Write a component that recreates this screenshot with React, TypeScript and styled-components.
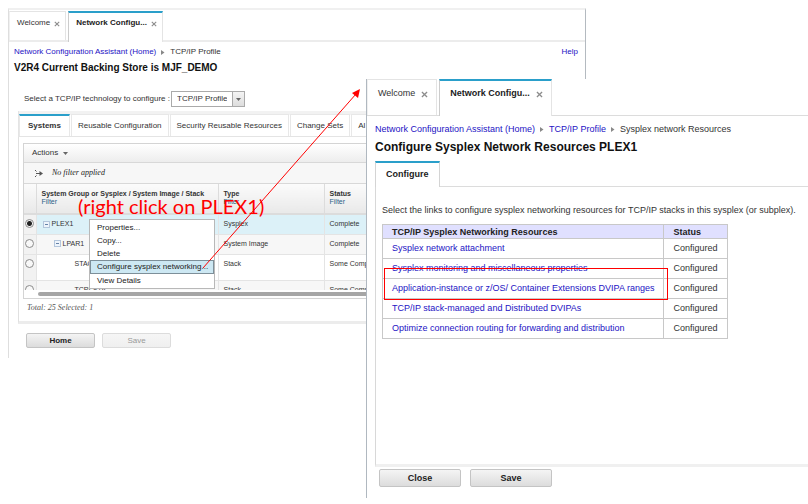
import React from "react";
import styled, { createGlobalStyle, css } from "styled-components";

const Global = createGlobalStyle`
  *, *::before, *::after { box-sizing: border-box; }
  body { margin: 0; background: #fff; color: #333; font-family: "Liberation Sans", Arial, sans-serif; }
  button, select, input { font: inherit; color: inherit; margin: 0; }
`;

const Desktop = styled.div`
  position: relative;
  min-height: 100vh;
  overflow: hidden;
  padding: 8px 0 0 8px;
`;

/* ---------- shared window parts ---------- */

const BackWindow = styled.section`
  width: calc(100% - 222px);
  border-top: 2px solid #f0f0f0;
  border-left: 1px solid #dedede;
  border-right: 1px solid #b4bac0;
  font-size: 8px;
  line-height: 10px;
`;

const FrontWindow = styled.section`
  position: absolute;
  left: 366px;
  right: 0;
  top: 79px;
  bottom: 6px;
  display: flex;
  flex-direction: column;
  background: #fff;
  border-left: 1px solid #b0b8c0;
  font-size: 9px;
  line-height: 12px;
`;

const TabBar = styled.div<{ $tall?: boolean }>`
  display: flex;
  gap: 2px;
  height: ${(p) => (p.$tall ? 37 : 32)}px;
  padding-top: ${(p) => (p.$tall ? 0 : 1)}px;
  border-bottom: ${(p) => (p.$tall ? "1px solid #dcdcdc" : "2px solid #ececec")};
`;

const WindowTab = styled.div<{ $active?: boolean; $tall?: boolean }>`
  display: flex;
  align-items: flex-start;
  gap: ${(p) => (p.$tall ? 6 : 4)}px;
  padding: ${(p) => (p.$tall ? "6px 8px 0 10px" : "5px 5px 0 7px")};
  height: ${(p) => (p.$tall ? 37 : 31)}px;
  border: 1px solid #e4e4e4;
  border-left-color: ${(p) => (p.$active ? "#ccc" : "#f0f0f0")};
  border-bottom: 0;
  background: #fff;
  ${(p) =>
    p.$active
      ? css`
          border-top: 2px solid #2a9fca;
          font-weight: bold;
          color: #222;
        `
      : css`
          height: ${p.$tall ? 36 : 29}px;
          padding-top: ${p.$tall ? 7 : 6}px;
        `}
`;

const TabButton = styled.button`
  padding: 0;
  border: 0;
  background: none;
  white-space: nowrap;
`;

const CloseTab = styled.button<{ $tall?: boolean }>`
  display: flex;
  padding: ${(p) => (p.$tall ? 4 : 3)}px 0 0;
  border: 0;
  background: none;
  color: #8c8c8c;
`;

const CloseGlyph = ({ size }: { size: number }) => (
  <svg width={size} height={size} viewBox="0 0 6 6" aria-hidden="true">
    <path d="M.8.8l4.4 4.4M5.2.8L.8 5.2" stroke="currentColor" strokeWidth="1.1" />
  </svg>
);

const Crumbs = styled.nav`
  display: flex;
  align-items: center;
  gap: 5px;
  white-space: nowrap;
`;

const Link = styled.a`
  color: #1d12c4;
  text-decoration: none;
`;

const Spacer = styled.span`
  flex: 1;
`;

const CrumbArrow = () => (
  <svg width="4" height="5" viewBox="0 0 4 5" aria-hidden="true">
    <path d="M0 0l3.5 2.5L0 5z" fill="#888" />
  </svg>
);

const ActionButton = styled.button<{ $wide?: boolean }>`
  width: ${(p) => (p.$wide ? 82 : 69)}px;
  height: ${(p) => (p.$wide ? 18 : 15)}px;
  padding: 0;
  border: 1px solid #c4c4c4;
  border-radius: 2px;
  background: linear-gradient(#f4f4f4, #dcdcdc);
  color: #222;
  font-weight: bold;
  &:disabled {
    color: #999;
    font-weight: normal;
    border-color: #dcdcdc;
    background: linear-gradient(#f6f6f6, #efefef);
  }
`;

/* ---------- back window ---------- */

const BackHead = styled.header`
  padding: 5px 7px 0 5px;
`;

const BackTitle = styled.h1`
  margin: 4px 0 0;
  font-size: 10px;
  line-height: 14px;
  color: #111;
`;

const TechRow = styled.div`
  display: flex;
  align-items: center;
  gap: 1px;
  margin: 16px 0 0 15px;
`;

const SelectBox = styled.div`
  display: flex;
  height: 16px;
  width: 74px;
  border: 1px solid #aaa;
`;

const Select = styled.select`
  appearance: none;
  flex: 1;
  min-width: 0;
  padding: 0 5px;
  border: 0;
  border-radius: 0;
  background: #fff;
  outline: none;
`;

const SelectCap = styled.span`
  display: flex;
  align-items: center;
  justify-content: center;
  width: 12px;
  border-left: 1px solid #aaa;
  background: linear-gradient(#f4f4f4, #ddd);
`;

const DownGlyph = () => (
  <svg width="5" height="3" viewBox="0 0 5 3" aria-hidden="true">
    <path d="M0 0h5L2.5 3z" fill="#666" />
  </svg>
);

const InnerTabs = styled.div`
  display: flex;
  gap: 1px;
  margin: 4px 0 0 9px;
  padding-top: 3px;
  height: 26px;
  overflow: hidden;
  background: linear-gradient(#f2f2f2 4px, #fff 4px);
  border-bottom: 1px solid #e4e4e4;
  border-left: 1px solid #e4e4e4;
`;

const InnerTab = styled.button<{ $active?: boolean }>`
  flex: none;
  padding: 0 ${(p) => (p.$active ? 8 : 6)}px;
  border: 1px solid #e8e8e8;
  border-top: ${(p) => (p.$active ? "2px solid #2a9fca" : "1px solid #e8e8e8")};
  border-bottom: 0;
  background: #fff;
  font-weight: ${(p) => (p.$active ? "bold" : "normal")};
`;

const BackPanel = styled.div`
  margin-left: 9px;
  padding: 6px 0 8px 4px;
  border-left: 1px solid #e0e0e0;
  border-bottom: 3px solid #ececec;
`;

const GridFrame = styled.div`
  border: 1px solid #d4d4d4;
`;

const Toolbar = styled.div`
  display: flex;
  align-items: center;
  height: 19px;
  padding-left: 8px;
  border-bottom: 1px solid #d8d8d8;
  background: linear-gradient(#fff, #ededed);
`;

const MenuButton = styled.button`
  display: flex;
  align-items: center;
  gap: 5px;
  padding: 0;
  border: 0;
  background: none;
`;

const FilterBar = styled.div`
  display: flex;
  align-items: center;
  gap: 9px;
  height: 21px;
  padding-left: 10px;
  border-bottom: 1px solid #d8d8d8;
  background: #f7f7f7;
  font: italic 8px/10px "Liberation Serif", Georgia, serif;
  color: #222;
`;

const GridClip = styled.div`
  height: 106px;
  overflow: hidden;
`;

const Grid = styled.table`
  width: 100%;
  border-collapse: collapse;
  table-layout: fixed;
  font-size: 7px;
  line-height: 8px;
  th {
    height: 30px;
    padding: 6px 0 0 5px;
    vertical-align: top;
    text-align: left;
    border-right: 1px solid #dcdcdc;
    border-bottom: 2px solid #dcdcdc;
    background: linear-gradient(#fbfbfb, #e9e9e9);
    white-space: nowrap;
  }
  td {
    padding: 5px 0 0 5px;
    vertical-align: top;
    border-right: 1px solid #e4e4e4;
    border-bottom: 1px solid #e4e4e4;
    white-space: nowrap;
  }
`;

const FilterLink = styled.a`
  display: block;
  color: #2b5f86;
  font-weight: normal;
  text-decoration: none;
`;

const Row = styled.tr<{ $tone: string; $h: number }>`
  height: ${(p) => p.$h}px;
  background: ${(p) => p.$tone};
  td:first-child {
    padding: 4px 0 0 1px;
    background: #f2f2f2;
  }
`;

const Radio = styled.input`
  appearance: none;
  display: block;
  width: 9px;
  height: 9px;
  border: 1px solid #8c8c8c;
  border-radius: 50%;
  background: #f8f8f8;
  &:checked {
    background: radial-gradient(circle, #222 0 2px, #f4f4f4 3px);
  }
`;

const TreeName = styled.span<{ $level: number }>`
  display: flex;
  align-items: center;
  gap: 2px;
  padding-left: ${(p) => [1, 12, 33][p.$level]}px;
`;

const Minus = () => (
  <svg width="7" height="7" viewBox="0 0 7 7" aria-hidden="true">
    <rect x=".5" y=".5" width="6" height="6" fill="#eef4fb" stroke="#b4c6dc" />
    <path d="M2 3.5h3" stroke="#6682a8" />
  </svg>
);

const ScrollTrack = styled.div`
  height: 8px;
  padding: 2px 0 0 14px;
  background: #fff;
`;

const ScrollThumb = styled.div`
  height: 4px;
  border-radius: 2px 0 0 2px;
  background: #a6a6a6;
`;

const Totals = styled.p`
  margin: 4px 0 0 4px;
  font: italic 8px/10px "Liberation Serif", Georgia, serif;
  color: #555;
`;

const BackButtons = styled.footer`
  display: flex;
  gap: 7px;
  padding: 9px 0 10px 17px;
`;

/* ---------- context menu ---------- */

const ContextMenu = styled.div`
  position: absolute;
  left: 89px;
  top: 219px;
  width: 126px;
  display: flex;
  flex-direction: column;
  padding: 1px 0;
  border: 1px solid #b8b8b8;
  background: #fff;
  color: #222;
  font-size: 8px;
  line-height: 10px;
`;

const MenuItem = styled.button<{ $hover?: boolean }>`
  height: ${(p) => (p.$hover ? 14 : 13)}px;
  padding: 0 6px;
  text-align: left;
  border: 1px solid ${(p) => (p.$hover ? "#7d8f99" : "transparent")};
  background: ${(p) => (p.$hover ? "#cde8f3" : "#fff")};
  white-space: nowrap;
`;

/* ---------- front window ---------- */

const FrontHead = styled.header`
  padding: 7px 0 0 8px;
`;

const FrontTitle = styled.h1`
  margin: 5px 0 6px;
  font-size: 12px;
  line-height: 15px;
  color: #111;
`;

const ConfigTabs = styled.div`
  display: flex;
  margin-left: 8px;
  height: 26px;
  border-bottom: 1px solid #dcdcdc;
`;

const ConfigTab = styled.button`
  height: 26px;
  padding: 0 10px 2px;
  border: 1px solid #d4d4d4;
  border-top: 2px solid #2a9fca;
  border-bottom: 0;
  background: #fff;
  font-weight: bold;
  color: #222;
`;

const FrontPanel = styled.div`
  flex: 1;
  margin-left: 8px;
  padding: 17px 6px 0;
  border-left: 1px solid #d8d8d8;
  border-bottom: 3px solid #f0f0f0;
`;

const Intro = styled.p`
  margin: 0 0 8px;
  white-space: nowrap;
`;

const Resources = styled.table`
  border-collapse: collapse;
  th, td {
    padding: 0 9px;
    border: 1px solid #c8c8c8;
    text-align: left;
    white-space: nowrap;
  }
  th {
    height: 14px;
    background: #e0e0ff;
    color: #222;
  }
  td {
    height: 20px;
    padding-bottom: 2px;
  }
`;

const FrontButtons = styled.footer`
  display: flex;
  gap: 9px;
  padding: 2px 0 11px 12px;
`;

/* ---------- annotations ---------- */

const Note = styled.p`
  position: absolute;
  left: 78px;
  top: 194px;
  margin: 0;
  font: 20px/24px Lato, sans-serif;
  color: #f00;
  white-space: nowrap;
`;

const ArrowLayer = styled.svg`
  position: absolute;
  left: 200px;
  top: 84px;
  pointer-events: none;
`;

const Callout = styled.div`
  position: absolute;
  left: 384px;
  top: 268px;
  width: 284px;
  height: 32px;
  border: 1px solid #f00;
  pointer-events: none;
`;

const rows = [
  { name: "PLEX1", level: 0, type: "Sysplex", status: "Complete", tone: "#dcf1f8", h: 20, on: true },
  { name: "LPAR1", level: 1, type: "System Image", status: "Complete", tone: "#f7f7f7", h: 20 },
  { name: "STACK1", level: 2, type: "Stack", status: "Some Complete", tone: "#ffffff", h: 26 },
  { name: "TCPI-S1A", level: 2, type: "Stack", status: "Some Complete", tone: "#f7f7f7", h: 26 },
];

const resources = [
  "Sysplex network attachment",
  "Sysplex monitoring and miscellaneous properties",
  "Application-instance or z/OS/ Container Extensions DVIPA ranges",
  "TCP/IP stack-managed and Distributed DVIPAs",
  "Optimize connection routing for forwarding and distribution",
];

const menu = ["Properties...", "Copy...", "Delete", "Configure sysplex networking...", "View Details"];

const WindowTabs = ({ tall }: { tall?: boolean }) => (
  <TabBar $tall={tall}>
    {["Welcome", "Network Configu..."].map((label, i) => (
      <WindowTab key={label} $active={i === 1} $tall={tall}>
        <TabButton>{label}</TabButton>
        <CloseTab $tall={tall} aria-label={`Close ${label}`}>
          <CloseGlyph size={tall ? 7 : 6} />
        </CloseTab>
      </WindowTab>
    ))}
  </TabBar>
);

export default function App() {
  return (
    <Desktop>
      <Global />
      <BackWindow>
        <WindowTabs />
        <BackHead>
          <Crumbs>
            <Link href="#home">Network Configuration Assistant (Home)</Link>
            <CrumbArrow />
            <span>TCP/IP Profile</span>
            <Spacer />
            <Link href="#help">Help</Link>
          </Crumbs>
          <BackTitle>V2R4 Current Backing Store is MJF_DEMO</BackTitle>
        </BackHead>
        <TechRow>
          <label htmlFor="tech">Select a TCP/IP technology to configure :</label>
          <SelectBox>
            <Select id="tech" defaultValue="tcp">
              <option value="tcp">TCP/IP Profile</option>
            </Select>
            <SelectCap>
              <DownGlyph />
            </SelectCap>
          </SelectBox>
        </TechRow>
        <InnerTabs>
          <InnerTab $active>Systems</InnerTab>
          <InnerTab>Reusable Configuration</InnerTab>
          <InnerTab>Security Reusable Resources</InnerTab>
          <InnerTab>Change Sets</InnerTab>
          <InnerTab>Al</InnerTab>
        </InnerTabs>
        <BackPanel>
          <GridFrame>
            <Toolbar>
              <MenuButton>
                Actions <DownGlyph />
              </MenuButton>
            </Toolbar>
            <FilterBar>
              <svg width="9" height="9" viewBox="0 0 9 9" aria-hidden="true">
                <path d="M1 1l1.5 1.5M1 8l1.5-1.5M2 4.5h4" stroke="#555" fill="none" />
                <path d="M5.5 2L9 4.5 5.5 7z" fill="#555" />
              </svg>
              No filter applied
            </FilterBar>
            <GridClip>
              <Grid>
                <colgroup>
                  <col style={{ width: 12 }} />
                  <col style={{ width: 182 }} />
                  <col style={{ width: 106 }} />
                  <col />
                </colgroup>
                <thead>
                  <tr>
                    <th />
                    <th>
                      System Group or Sysplex / System Image / Stack
                      <FilterLink href="#filter-name">Filter</FilterLink>
                    </th>
                    <th>
                      Type
                      <FilterLink href="#filter-type">Filter</FilterLink>
                    </th>
                    <th>
                      Status
                      <FilterLink href="#filter-status">Filter</FilterLink>
                    </th>
                  </tr>
                </thead>
                <tbody>
                  {rows.map((r) => (
                    <Row key={r.name} $tone={r.tone} $h={r.h}>
                      <td>
                        <Radio type="radio" name="system" aria-label={r.name} defaultChecked={r.on} />
                      </td>
                      <td>
                        <TreeName $level={r.level}>
                          {r.level < 2 && <Minus />}
                          {r.name}
                        </TreeName>
                      </td>
                      <td>{r.type}</td>
                      <td>{r.status}</td>
                    </Row>
                  ))}
                </tbody>
              </Grid>
            </GridClip>
            <ScrollTrack>
              <ScrollThumb />
            </ScrollTrack>
          </GridFrame>
          <Totals>Total: 25 Selected: 1</Totals>
        </BackPanel>
        <BackButtons>
          <ActionButton>Home</ActionButton>
          <ActionButton disabled>Save</ActionButton>
        </BackButtons>
      </BackWindow>

      <ContextMenu role="menu">
        {menu.map((label, i) => (
          <MenuItem key={label} role="menuitem" $hover={i === 3}>
            {label}
          </MenuItem>
        ))}
      </ContextMenu>
      <Note>(right click on PLEX1)</Note>

      <FrontWindow>
        <WindowTabs tall />
        <FrontHead>
          <Crumbs>
            <Link href="#home">Network Configuration Assistant (Home)</Link>
            <CrumbArrow />
            <Link href="#profile">TCP/IP Profile</Link>
            <CrumbArrow />
            <span>Sysplex network Resources</span>
          </Crumbs>
          <FrontTitle>Configure Sysplex Network Resources PLEX1</FrontTitle>
        </FrontHead>
        <ConfigTabs>
          <ConfigTab>Configure</ConfigTab>
        </ConfigTabs>
        <FrontPanel>
          <Intro>
            Select the links to configure sysplex networking resources for TCP/IP stacks in this sysplex (or subplex).
          </Intro>
          <Resources>
            <thead>
              <tr>
                <th>TCP/IP Sysplex Networking Resources</th>
                <th>Status</th>
              </tr>
            </thead>
            <tbody>
              {resources.map((name, i) => (
                <tr key={name}>
                  <td>
                    <Link href={`#resource-${i}`}>{name}</Link>
                  </td>
                  <td>Configured</td>
                </tr>
              ))}
            </tbody>
          </Resources>
        </FrontPanel>
        <FrontButtons>
          <ActionButton $wide>Close</ActionButton>
          <ActionButton $wide>Save</ActionButton>
        </FrontButtons>
      </FrontWindow>

      <ArrowLayer width="165" height="190" viewBox="0 0 165 190" aria-hidden="true">
        <path d="M3 184L156 10" stroke="#f00" />
        <path d="M160 5l-2 9-6-5z" fill="#f00" />
      </ArrowLayer>
      <Callout />
    </Desktop>
  );
}
